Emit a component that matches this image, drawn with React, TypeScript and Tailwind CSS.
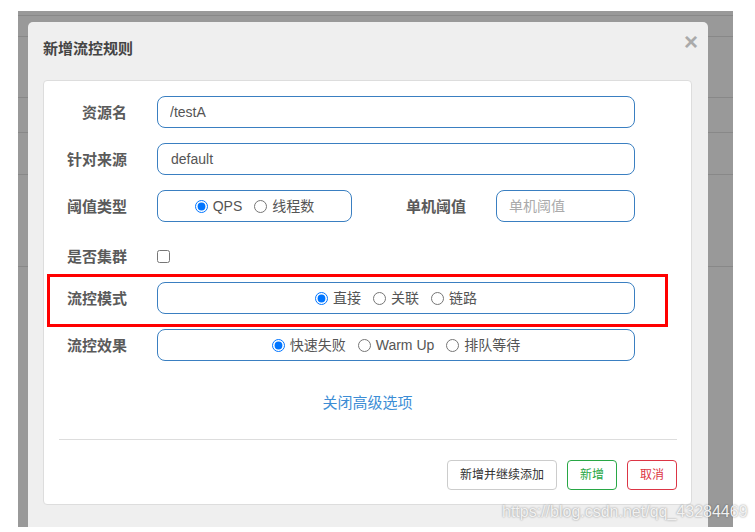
import { useState } from "react";

const font = "font-['Liberation_Sans','Noto_Sans_CJK_SC',sans-serif]";

const RadioGroup = ({
  name,
  options,
  initial,
}: {
  name: string;
  options: string[];
  initial: string;
}) => {
  const [value, setValue] = useState(initial);
  return (
    <div className="flex items-center justify-center gap-[12px] text-[14px] text-[#555]">
      {options.map((opt) => (
        <label key={opt} className="flex items-center gap-[5px]">
          <input
            type="radio"
            name={name}
            checked={value === opt}
            onChange={() => setValue(opt)}
            className="h-[13px] w-[13px]"
          />
          <span>{opt}</span>
        </label>
      ))}
    </div>
  );
};

const Label = ({ text, className = "" }: { text: string; className?: string }) => (
  <div className={`shrink-0 pt-[2px] text-right text-[15px] font-bold text-[#5a5a5a] ${className}`}>{text}</div>
);

const App = () => {
  const [cluster, setCluster] = useState(false);

  return (
    <div className={`relative h-[532px] w-[755px] overflow-hidden bg-white ${font}`}>
      {/* backdrop over the rule table */}
      <div className="relative ml-[18px] mt-[11px] h-[516px] w-[715px] overflow-hidden bg-[#999]">
        <div className="h-[5px] border-b border-[#888]" />
        <div className="h-[21px] border-b border-[#888]" />
        <div className="h-[61px] border-b border-[#888]" />
        <div className="h-[35px] border-b border-[#888]" />
        <div className="h-[42px] border-b border-[#888]" />
        <div className="h-[92px] border-b border-[#888]" />

        {/* modal */}
        <div className="absolute left-[10px] top-[11px] h-[560px] w-[680px] rounded-[5px] bg-[#efefef]">
          <div className="h-[58px] pl-[15px] pt-[17px] text-[15px] font-bold leading-[20px] text-[#444]">
            新增流控规则
          </div>
          <button className="absolute right-[10px] top-[6px] text-[24px] font-bold leading-[28px] text-[#aaa]">
            ×
          </button>

          <div className="relative ml-[15px] h-[425px] w-[649px] rounded-[4px] border border-[#ddd] bg-white pt-[15px]">
            <div className="flex w-[591px] flex-col">
              <div className="flex h-[32px] items-center gap-[30px]">
                <Label text="资源名" className="w-[83px]" />
                <input
                  defaultValue="/testA"
                  className="h-[32px] flex-1 rounded-[8px] border border-[#3a7fc1] px-[12px] text-[14px] text-[#555] outline-none"
                />
              </div>

              <div className="mt-[15px] flex h-[32px] items-center gap-[30px]">
                <Label text="针对来源" className="w-[83px]" />
                <input
                  defaultValue="default"
                  className="h-[32px] flex-1 rounded-[8px] border border-[#3a7fc1] px-[13px] text-[14px] text-[#555] outline-none"
                />
              </div>

              <div className="mt-[15px] flex h-[32px] items-center">
                <Label text="阈值类型" className="w-[83px]" />
                <div className="ml-[30px] flex h-[32px] w-[195px] items-center justify-center rounded-[8px] border border-[#3a7fc1]">
                  <RadioGroup name="grade" options={["QPS", "线程数"]} initial="QPS" />
                </div>
                <Label text="单机阈值" className="w-[114px]" />
                <input
                  placeholder="单机阈值"
                  className="ml-[30px] h-[32px] w-[139px] rounded-[8px] border border-[#3a7fc1] px-[12px] text-[14px] text-[#555] outline-none placeholder:text-[#aaa]"
                />
              </div>

              <div className="mt-[15px] flex h-[32px] items-center gap-[30px] pt-[6px]">
                <Label text="是否集群" className="w-[83px]" />
                <input
                  type="checkbox"
                  checked={cluster}
                  onChange={() => setCluster(!cluster)}
                  className="h-[13px] w-[13px]"
                />
              </div>

              <div className="mt-[13px] flex h-[32px] items-center gap-[30px]">
                <Label text="流控模式" className="w-[83px]" />
                <div className="flex h-[32px] flex-1 items-center justify-center rounded-[8px] border border-[#3a7fc1]">
                  <RadioGroup name="strategy" options={["直接", "关联", "链路"]} initial="直接" />
                </div>
              </div>

              <div className="mt-[15px] flex h-[32px] items-center gap-[30px]">
                <Label text="流控效果" className="w-[83px]" />
                <div className="flex h-[32px] flex-1 items-center justify-center rounded-[8px] border border-[#3a7fc1]">
                  <RadioGroup
                    name="behavior"
                    options={["快速失败", "Warm Up", "排队等待"]}
                    initial="快速失败"
                  />
                </div>
              </div>
            </div>

            <div className="mt-[32px] text-center text-[15px] leading-[20px] text-[#3c8dd5]">
              <a href="#">关闭高级选项</a>
            </div>

            <div className="ml-[15px] mr-[14px] mt-[26px] border-t border-[#ddd]" />

            <div className="ml-[15px] mr-[14px] mt-[20px] flex justify-end gap-[10px] text-[12px]">
              <button className="h-[30px] w-[110px] rounded-[4px] border border-[#ccc] bg-white text-[#333]">
                新增并继续添加
              </button>
              <button className="h-[30px] w-[50px] rounded-[4px] border border-[#28a745] bg-white text-[#28a745]">
                新增
              </button>
              <button className="h-[30px] w-[50px] rounded-[4px] border border-[#dc3545] bg-white text-[#dc3545]">
                取消
              </button>
            </div>

            {/* annotation box */}
            <div className="absolute left-[3px] top-[193px] h-[53px] w-[621px] border-[3px] border-[#ff0000]" />
          </div>
        </div>
      </div>

      <div className="absolute left-[502px] top-[504px] text-[16px] leading-[16px] text-[#f2f2f2] [text-shadow:0_0_2px_rgba(0,0,0,0.45)]">
        https://blog.csdn.net/qq_43284469
      </div>
    </div>
  );
};

export default App;
